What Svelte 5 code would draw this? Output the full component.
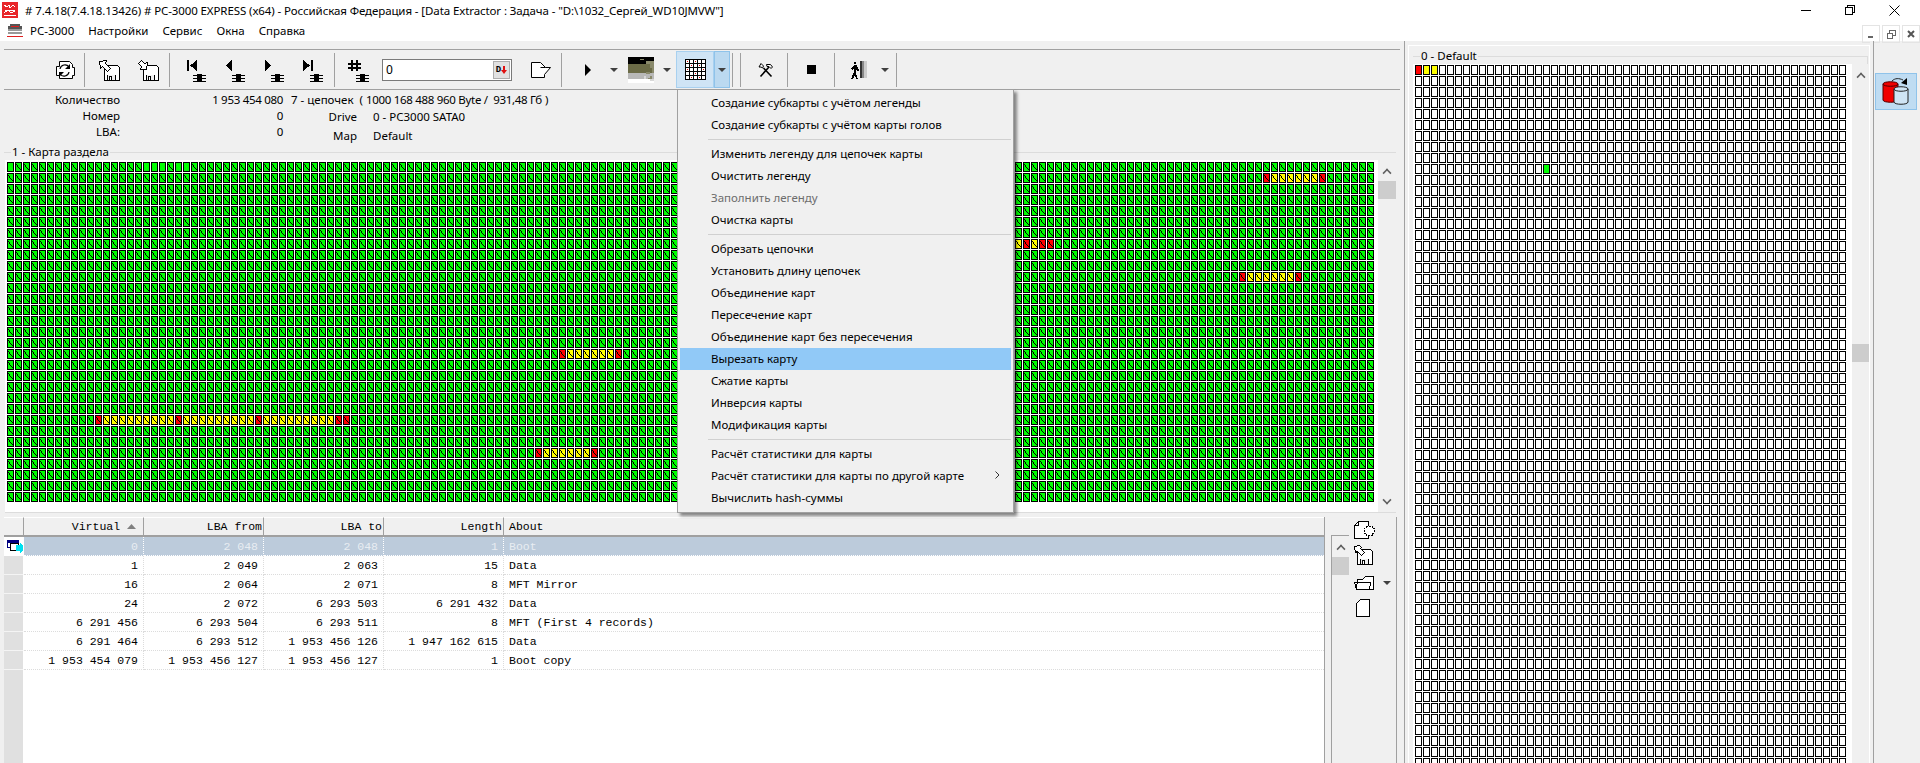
<script>
  const menuBar = ['PC-3000', 'Настройки', 'Сервис', 'Окна', 'Справка'];

  const popup = [
    ['Создание субкарты с учётом легенды', 'Создание субкарты с учётом карты голов'],
    ['Изменить легенду для цепочек карты', 'Очистить легенду', 'Заполнить легенду', 'Очистка карты'],
    ['Обрезать цепочки', 'Установить длину цепочек', 'Объединение карт', 'Пересечение карт', 'Объединение карт без пересечения', 'Вырезать карту', 'Сжатие карты', 'Инверсия карты', 'Модификация карты'],
    ['Расчёт статистики для карты', 'Расчёт статистики для карты по другой карте', 'Вычислить hash-суммы']
  ];

  const rows = [
    ['0', '2 048', '2 048', '1', 'Boot'],
    ['1', '2 049', '2 063', '15', 'Data'],
    ['16', '2 064', '2 071', '8', 'MFT Mirror'],
    ['24', '2 072', '6 293 503', '6 291 432', 'Data'],
    ['6 291 456', '6 293 504', '6 293 511', '8', 'MFT (First 4 records)'],
    ['6 291 464', '6 293 512', '1 953 456 126', '1 947 162 615', 'Data'],
    ['1 953 454 079', '1 953 456 127', '1 953 456 127', '1', 'Boot copy']
  ];

  // r = red, y = yellow, p = plain green, . = leave the default cell
  const chain = 'r' + 'y'.repeat(6) + 'r';
  const runs = [
    [0, 0, 'p................ppp.pp'],
    [1, 157, chain],
    [7, 126, 'yryrr'],
    [10, 154, chain],
    [17, 69, chain],
    [23, 11, ('r' + 'y'.repeat(9)).repeat(3) + 'rr'],
    [26, 66, chain]
  ];

  const kinds = new Map();
  for (const [row, col, s] of runs) {
    [...s].forEach((k, i) => {
      if (k !== '.') kinds.set(row + ':' + (col + i), k);
    });
  }

  function buildMap(cols, rowCount, kindAt, striped) {
    const out = { frame: '', g: '', r: '', y: '', p: '', w: '', diag: '' };
    for (let row = 0; row < rowCount; row++) {
      for (let col = 0; col < cols; col++) {
        const x = col * 8;
        const y = row * 11;
        const k = kindAt(row, col);
        out.frame += `M${x} ${y}h7v10h-7z`;
        out[k] += `M${x + 1} ${y + 1}h5v8h-5z`;
        if (striped && k !== 'p') {
          out.diag += `M${x + 1} ${y + 2}h1v1h-1zM${x + 2} ${y + 3}h1v2h-1zM${x + 3} ${y + 5}h1v1h-1zM${x + 4} ${y + 6}h1v1h-1zM${x + 5} ${y + 7}h1v1h-1z`;
        }
      }
    }
    return out;
  }

  const leftMap = buildMap(171, 31, (r, c) => kinds.get(r + ':' + c) ?? 'g', true);
  const rightMap = buildMap(54, 64, (r, c) => {
    if (r === 0 && c === 0) return 'r';
    if (r === 0 && c < 3) return 'y';
    if (r === 9 && c === 16) return 'g';
    return 'w';
  }, false);
</script>

{#snippet marker(x, y)}
  <path d="M{x} {y}h13v1h-13zM{x} {y + 3}h13v1h-13zM{x} {y + 6}h13v1h-13zM{x + 4} {y - 1}h5v9h-5z" fill="#000" stroke="none" />
{/snippet}

{#snippet caret()}
  <svg class="caret" width="8" height="4" viewBox="0 0 8 4"><path d="M0 0h8L4 4z" fill="#404040" /></svg>
{/snippet}

{#snippet floppy(x, y)}
  <path d="M{x + .5} {y + .5}h13l2 2v13h-15zM{x + 3.5} {y + 9.5}v6h8v-6M{x + 5.5} {y + 11.5}h2v4h-2z" fill="#fff" stroke="#000" />
{/snippet}

{#snippet mapLayers(m)}
  <path d={m.frame} fill="#000" />
  <path d={m.g} fill="#00ff00" />
  <path d={m.p} fill="#00ff00" />
  <path d={m.r} fill="#ff0000" />
  <path d={m.y} fill="#ffff00" />
  <path d={m.w} fill="#fff" />
  <path d={m.diag} fill="#000" />
{/snippet}

<div class="app">
  <header class="titlebar">
    <svg class="appicon" width="16" height="16" viewBox="0 0 16 16" shape-rendering="crispEdges">
      <rect width="16" height="16" fill="#e8262a" />
      <path d="M2 3l3 2 2-2 1 3 3-3 2 2M3 8h10M2 11l4-3 3 3 4-2M2 13h12" fill="none" stroke="#fff" />
    </svg>
    <span class="title">&#35; 7.4.18(7.4.18.13426) &#35; PC-3000 EXPRESS (x64) - Российская Федерация - [Data Extractor : Задача - "D:\1032_Сергей_WD10JMVW"]</span>
    <div class="winbtns">
      <svg width="10" height="10" viewBox="0 0 10 10" shape-rendering="crispEdges"><path d="M0 5.5h10" stroke="#000" /></svg>
      <svg width="10" height="10" viewBox="0 0 10 10" shape-rendering="crispEdges"><path d="M.5 2.5h7v7h-7zM2.5 2.5v-2h7v7h-2" fill="none" stroke="#000" /></svg>
      <svg width="11" height="11" viewBox="0 0 11 11"><path d="M.5.5l10 10M10.500.5l-10 10" stroke="#000" /></svg>
    </div>
  </header>

  <nav class="menubar">
    <svg class="diskicon" width="16" height="13" viewBox="0 0 16 13" shape-rendering="crispEdges">
      <path d="M3 0h10v2h2v3H1V2h2z" fill="#555" />
      <path d="M1 5h14v2H1zM1 8h14v2H1z" fill="#999" />
      <path d="M4 2h8v1H4zM0 12h16v1H0z" fill="#e02020" />
    </svg>
    {#each menuBar as m}<span class="menuitem">{m}</span>{/each}
    <div class="mdibtns">
      <span class="mdi"><svg width="8" height="8" viewBox="0 0 8 8" shape-rendering="crispEdges"><path d="M1 6h5v2H1z" fill="#666" /></svg></span>
      <span class="mdi"><svg width="9" height="9" viewBox="0 0 9 9" shape-rendering="crispEdges"><path d="M.5 3.500h5v5h-5zM2.500 3V.5h6v5H6" fill="none" stroke="#666" /></svg></span>
      <span class="mdi"><svg width="8" height="8" viewBox="0 0 8 8"><path d="M1 1l6 6M7 1L1 7" stroke="#555" stroke-width="2" /></svg></span>
    </div>
  </nav>

  <div class="workspace">
    <section class="leftpane">
      <div class="toolbar">
        <button class="tb first">
          <svg width="22" height="22" viewBox="0 0 22 22">
            <path d="M5.500 2.500h10l3 3v3h2v8h-2v3h-13v-3h-3v-9h3z" fill="#fff" stroke="#000" />
            <path d="M6 10a5 5 0 0 1 9-2M15 13a5 5 0 0 1-9 2" fill="none" stroke="#000" stroke-width="1.200" />
            <path d="M16 5v5h-5zM5 18v-5h5z" fill="#000" />
          </svg>
        </button>
        <span class="sep"></span>
        <button class="tb">
          <svg width="24" height="24" viewBox="0 0 24 24" shape-rendering="crispEdges">
            {@render floppy(7, 7)}
            <path d="M2.500 3.500l7-1-1 3 5 5-3 3-5-5-2 2z" fill="#fff" stroke="#000" />
          </svg>
        </button>
        <button class="tb">
          <svg width="24" height="24" viewBox="0 0 24 24" shape-rendering="crispEdges">
            {@render floppy(7, 7)}
            <path d="M10.500 11.500l-6 0 1-3-3-3 3-3 3 3 3-1z" fill="#fff" stroke="#000" />
          </svg>
        </button>
        <span class="sep nav"></span>
        <button class="tb"><svg width="24" height="24" viewBox="0 0 24 24" shape-rendering="crispEdges"><path d="M3 2h2v11H3zM13 2v11L6 7.500z" fill="#000" />{@render marker(9, 17)}</svg></button>
        <button class="tb"><svg width="24" height="24" viewBox="0 0 24 24" shape-rendering="crispEdges"><path d="M9 2v11L3 7.500z" fill="#000" />{@render marker(9, 17)}</svg></button>
        <button class="tb"><svg width="24" height="24" viewBox="0 0 24 24" shape-rendering="crispEdges"><path d="M3 2v11l6-5.500z" fill="#000" />{@render marker(9, 17)}</svg></button>
        <button class="tb"><svg width="24" height="24" viewBox="0 0 24 24" shape-rendering="crispEdges"><path d="M2 2v11l7-5.500zM10 2h2v11h-2z" fill="#000" />{@render marker(9, 17)}</svg></button>
        <span class="sep hash"></span>
        <button class="tb narrow"><svg width="24" height="24" viewBox="0 0 24 24" shape-rendering="crispEdges"><path d="M4 2h2v11H4zM9 2h2v11H9zM1 5h13v2H1zM1 9h13v2H1z" fill="#000" />{@render marker(9, 17)}</svg></button>
        <div class="lbafield">
          <span>0</span>
          <span class="dbtn"><b>D</b><svg width="6" height="8" viewBox="0 0 6 8"><path d="M2 0h2v4h2L3 8 0 4h2z" fill="#e01010" /></svg></span>
        </div>
        <button class="tb doc">
          <svg width="22" height="20" viewBox="0 0 22 20">
            <path d="M1.500 2.500h9l5 5h5l-6 7v3h-13z" fill="#fff" stroke="#000" />
            <path d="M10.500 7.500h5" stroke="#000" />
          </svg>
        </button>
        <span class="sep play"></span>
        <button class="tb"><svg width="10" height="14" viewBox="0 0 10 14"><path d="M2 1v12l6-6z" fill="#000" /></svg></button>
        <span class="arr">{@render caret()}</span>
        <button class="tb thumb">
          <svg width="26" height="26" viewBox="0 0 26 26" shape-rendering="crispEdges">
            <rect width="26" height="7" fill="#000" />
            <rect y="7" width="26" height="9" fill="#6b6b47" />
            <rect y="16" width="26" height="6" fill="#b8b8b8" />
            <rect y="22" width="26" height="4" fill="#fff" />
            <path d="M12 2h4v1h-4zM18 4h8v3h-8zM22 7h4v4h-4zM24 11h2v5h-2zM18 15h4v2h-4zM22 19h2v3h-2zM20 21h2v1h-2z" fill="#8a8a6c" />
            <path d="M22 22h4v2h-4zM16 19h2v3h-2z" fill="#d8d8d8" />
          </svg>
        </button>
        <span class="arr">{@render caret()}</span>
        <div class="splitbtn">
          <span class="main">
            <svg width="21" height="21" viewBox="0 0 21 21" shape-rendering="crispEdges">
              <rect width="21" height="21" fill="#fff" />
              <path d="M.5.5h20v20H.5zM4.500 0v21M8.500 0v21M12.500 0v21M16.500 0v21M0 4.500h21M0 8.500h21M0 12.500h21M0 16.500h21" fill="none" stroke="#000" />
              <path d="M2 2h1v1H2zM10 2h1v1h-1zM6 6h1v1H6zM14 6h1v1h-1zM18 10h1v1h-1zM2 10h1v1H2zM10 14h1v1h-1zM6 18h1v1H6zM14 18h1v1h-1z" fill="#e00000" />
            </svg>
          </span>
          <span class="drop">{@render caret()}</span>
        </div>
        <span class="sep dbl"></span>
        <span class="sep dbl2"></span>
        <button class="tb">
          <svg width="16" height="16" viewBox="0 0 16 16">
            <path d="M2.500 14.500L11 5M13.500 14.500L5.500 6" stroke="#000" stroke-width="1.600" fill="none" />
            <path d="M8.500 2.500h4l2 2.500-1.500 1.500-2-2h-2zM1 5l2-3.500 2.500 2.500L4.500 6 3 5z" fill="#fff" stroke="#000" />
          </svg>
        </button>
        <span class="sep tools"></span>
        <button class="tb stop"><span class="stopmark"></span></button>
        <span class="sep stopsep"></span>
        <button class="tb walker">
          <svg width="20" height="20" viewBox="0 0 20 20" shape-rendering="crispEdges">
            <circle cx="6" cy="3" r="1.600" fill="#000" />
            <path d="M5 5h3l1 4 1 1-1 1-2-1 0 3 2 6H7l-1-4-2 4H2l3-7V8L3 10 2 9z" fill="#000" />
            <rect x="11" y="1" width="7" height="17" fill="#888" />
            <path d="M11 1h2v17h-2z" fill="#333" />
            <path d="M15 1h3v17h-3z" fill="#ccc" />
          </svg>
        </button>
        <span class="arr">{@render caret()}</span>
        <span class="sep last"></span>
      </div>

      <div class="info">
        <span class="lbl">Количество</span><span class="val">1 953 454 080</span>
        <div class="extra">
          <span class="chains">7 - цепочек  ( <span class="tight">1000 168 488 960 Byte /  931,48 Гб</span> )</span>
          <span class="kv"><i>Drive</i><span>0 - PC3000 SATA0</span></span>
          <span class="kv mapkv"><i>Map</i><span>Default</span></span>
        </div>
        <span class="lbl">Номер</span><span class="val">0</span>
        <span class="lbl">LBA:</span><span class="val">0</span>
      </div>

      <fieldset class="group">
        <legend>1 - Карта раздела</legend>
        <div class="mapbox">
          <svg class="cells" width="1372" height="352" shape-rendering="crispEdges">
            <g transform="translate(2 2)">
              {@render mapLayers(leftMap)}
            </g>
          </svg>
          <div class="vscroll">
            <span class="up"></span>
            <span class="knob"></span>
            <span class="down"></span>
          </div>
        </div>
      </fieldset>

      <div class="lower">
        <div class="tablewrap">
          <table>
            <colgroup>
              <col class="rh" /><col class="c" /><col class="c" /><col class="c" /><col class="c" /><col />
            </colgroup>
            <thead>
              <tr>
                <th></th>
                <th class="sorted">Virtual <svg width="9" height="5" viewBox="0 0 9 5"><path d="M0 5L4.500 0 9 5z" fill="#808080" /></svg></th>
                <th>LBA from</th>
                <th>LBA to</th>
                <th>Length</th>
                <th class="about">About</th>
              </tr>
            </thead>
            <tbody>
              {#each rows as r, i}
                <tr class:selected={i === 0}>
                  <td class="rowhead">
                    {#if i === 0}
                      <svg width="18" height="14" viewBox="0 0 18 14" shape-rendering="crispEdges">
                        <path d="M.5 1.500h11v7h-11z" fill="#fff" stroke="#000080" />
                        <path d="M1 2h10v2H1z" fill="#000080" />
                        <path d="M3.500 4.500h8v7h-8z" fill="#fff" stroke="#000" />
                        <path d="M9 6h4V4l5 5-5 5v-2H9z" fill="#00e0f0" />
                      </svg>
                    {/if}
                  </td>
                  {#each r as v, j}
                    <td class:about={j === 4}>{v}</td>
                  {/each}
                </tr>
              {/each}
              <tr class="filler"><td class="rowhead"></td><td colspan="5"></td></tr>
            </tbody>
          </table>
        </div>
        <aside class="sidetools">
          <div class="vscroll short">
            <span class="up"></span>
            <span class="knob"></span>
          </div>
          <div class="sideicons">
            <svg width="21" height="19" viewBox="0 0 21 19" shape-rendering="crispEdges">
              <path d="M4.500.5h10v17h-14v-13z" fill="#fff" stroke="#000" />
              <path d="M4.500.5v4h-4" fill="none" stroke="#000" />
              <path d="M12 5h6v2h2v5h-2v2h-6v-2h-2V7h2z" fill="#fff" stroke="#000" stroke-dasharray="2 1" />
            </svg>
            <svg width="20" height="20" viewBox="0 0 20 20" shape-rendering="crispEdges">
              {@render floppy(3, 4)}
              <path d="M.5 1.500l5-1 2 2-1 1 4 4-3 3-4-4-2 1z" fill="#fff" stroke="#000" />
            </svg>
            <div class="folder">
              <svg width="21" height="14" viewBox="0 0 21 14" shape-rendering="crispEdges">
                <path d="M3.500 3.500h5l3-3h8v13h-17zM.5 6.500h16l-1 7h-13z" fill="#fff" stroke="#000" />
              </svg>
              {@render caret()}
            </div>
            <svg class="blank" width="14" height="19" viewBox="0 0 14 19" shape-rendering="crispEdges">
              <path d="M4.500.5h9v17h-13v-13z" fill="#fff" stroke="#000" />
            </svg>
          </div>
        </aside>
      </div>
    </section>

    <div class="splitter"></div>

    <section class="rightpane">
      <fieldset class="group rgroup">
        <legend>0 - Default</legend>
        <div class="mapbox rbox">
          <svg class="cells" width="438" height="704" shape-rendering="crispEdges">
            <g transform="translate(2 1)">
              {@render mapLayers(rightMap)}
            </g>
          </svg>
          <div class="vscroll rscroll">
            <span class="up"></span>
            <span class="knob"></span>
          </div>
        </div>
      </fieldset>
    </section>

    <aside class="rightbar">
      <span class="dbbtn">
        <svg width="28" height="28" viewBox="0 0 28 28">
          <path d="M1 6c0-3 15-3 15 0v16c0 3-15 3-15 0z" fill="#f00000" stroke="#500" />
          <path d="M1 6c0 3 15 3 15 0" fill="none" stroke="#500" />
          <path d="M12 11c0-3 14-3 14 0v13c0 3-14 3-14 0z" fill="#cfe4f4" stroke="#222" />
          <path d="M12 11c0 3 14 3 14 0" fill="none" stroke="#222" />
          <path d="M19 5l6-5v7z" fill="#000" />
          <path d="M10 3c3-3 7-3 11-1" fill="none" stroke="#222" />
        </svg>
      </span>
    </aside>
  </div>

  <div class="popup">
    {#each popup as group, g}
      {#if g > 0}<div class="popsep"></div>{/if}
      {#each group as item}
        <div class="popitem" class:hot={item === 'Вырезать карту'} class:off={item === 'Заполнить легенду'}>
          <span>{item}</span>
          {#if item.includes('по другой карте')}
            <svg width="5" height="8" viewBox="0 0 5 8"><path d="M.5.5L4 4 .5 7.500" fill="none" stroke="#333" /></svg>
          {/if}
        </div>
      {/each}
    {/each}
  </div>
</div>

<style>
  :global(body) {
    margin: 0;
    overflow: hidden;
    background: #f0f0f0;
  }

  .app {
    position: relative;
    width: 1920px;
    height: 763px;
    overflow: hidden;
    display: flex;
    flex-direction: column;
    font-family: "Noto Sans", "Liberation Sans", sans-serif;
    font-size: 11.5px;
    color: #000;
    background: #f0f0f0;
  }

  svg {
    display: block;
    flex: none;
  }

  .titlebar {
    height: 20px;
    background: #fff;
    display: flex;
    align-items: center;
    padding-left: 2px;
    flex: none;
  }

  .title {
    margin-left: 7px;
    white-space: pre;
    letter-spacing: -0.1px;
  }

  .winbtns {
    margin-left: auto;
    display: flex;
    align-items: center;
    gap: 34px;
    padding-right: 20px;
  }

  .menubar {
    height: 21px;
    background: #fff;
    display: flex;
    align-items: center;
    padding-left: 7px;
    flex: none;
  }

  .diskicon {
    margin-right: 7px;
  }

  .menuitem {
    margin-right: 14px;
  }

  .mdibtns {
    margin-left: auto;
    display: flex;
    gap: 2px;
    height: 18px;
    align-self: flex-start;
    margin-top: 5px;
  }

  .mdi {
    width: 16px;
    height: 16px;
    border: 1px solid #e4e4e4;
    display: flex;
    align-items: center;
    justify-content: center;
  }

  .workspace {
    flex: 1;
    display: flex;
    min-height: 0;
  }

  .leftpane {
    width: 1392px;
    padding: 8px 0 0 4px;
    display: flex;
    flex-direction: column;
    flex: none;
  }

  .toolbar {
    height: 39px;
    margin-right: -4px;
    border-top: 1px solid #a0a0a0;
    border-bottom: 1px solid #a0a0a0;
    display: flex;
    align-items: center;
    flex: none;
    position: relative;
  }

  .tb {
    width: 39px;
    height: 30px;
    padding: 0;
    border: none;
    background: none;
    display: flex;
    align-items: center;
    justify-content: center;
    flex: none;
  }

  .tb.first {
    margin-left: 41px;
  }

  .tb.narrow {
    width: 40px;
  }

  .sep {
    width: 1px;
    height: 34px;
    background: #a0a0a0;
    margin-right: 4px;
    flex: none;
  }

  .sep.nav {
    margin-left: 2px;
    margin-right: 6px;
  }

  .sep.hash {
    margin-left: 2px;
  }

  .sep.play {
    margin-right: 6px;
  }

  .sep.dbl {
    margin-left: 2px;
    margin-right: 7px;
  }

  .sep.dbl2 {
    margin-right: 5px;
  }

  .sep.tools {
    margin-left: 2px;
  }

  .sep.stopsep {
    margin-left: 3px;
  }

  .sep.last {
    margin-left: 4px;
  }

  .lbafield {
    width: 125px;
    height: 20px;
    margin-left: 3px;
    border: 1px solid #7a7a7a;
    background: #fff;
    display: flex;
    align-items: center;
    justify-content: space-between;
    padding-left: 3px;
    font-size: 12px;
    box-sizing: content-box;
    flex: none;
  }

  .dbtn {
    width: 15px;
    height: 16px;
    margin-right: 1px;
    background: #e1e1e1;
    border: 1px solid #adadad;
    display: flex;
    align-items: center;
    justify-content: center;
    gap: 0;
    font-family: "Liberation Mono", monospace;
    font-size: 9px;
  }

  .tb.doc {
    width: 40px;
    margin-left: 9px;
  }

  .arr {
    width: 14px;
    display: flex;
    justify-content: center;
    flex: none;
  }

  .splitbtn {
    height: 37px;
    margin-left: 2px;
    display: flex;
    flex: none;
  }

  .splitbtn .main {
    width: 38px;
    background: #cfe4f5;
    border: 1px solid #a8d0ef;
    box-sizing: border-box;
    display: flex;
    align-items: center;
    justify-content: center;
  }

  .splitbtn .drop {
    width: 16px;
    background: #bbd9f0;
    border: 1px solid #8fc3ea;
    box-sizing: border-box;
    display: flex;
    align-items: center;
    justify-content: center;
  }

  .stopmark {
    width: 9px;
    height: 9px;
    background: #000;
  }

  .info {
    height: 55px;
    flex: none;
    display: grid;
    grid-template-columns: 116px 163px 1fr;
    grid-auto-rows: 16px;
    padding-top: 2px;
    box-sizing: border-box;
    line-height: 16px;
  }

  .lbl,
  .val {
    text-align: right;
  }

  .val {
    letter-spacing: -0.3px;
  }

  .extra {
    grid-row: 1 / span 3;
    grid-column: 3;
    display: flex;
    flex-direction: column;
    padding-left: 8px;
  }

  .chains {
    white-space: pre;
  }

  .tight {
    letter-spacing: -0.3px;
  }

  .kv {
    display: flex;
    margin-top: 1px;
  }

  .kv i {
    width: 66px;
    font-style: normal;
    text-align: right;
    margin-right: 16px;
  }

  .kv.mapkv {
    margin-top: 3px;
  }

  .group {
    margin: 0 0 4px;
    padding: 1px 0 0;
    border: 1px solid #dcdcdc;
    border-width: 1px 0 0;
    min-width: 0;
    flex: none;
  }

  .group legend {
    margin-left: 7px;
    padding: 0 1px;
    line-height: 14px;
  }

  .mapbox {
    height: 352px;
    display: flex;
    background: #fff;
    margin-left: 1px;
    border-bottom: 1px solid #dcdcdc;
  }

  .cells {
    flex: none;
  }

  .vscroll {
    width: 18px;
    margin-left: auto;
    background: #f0f0f0;
    border-left: 1px solid #fff;
    display: flex;
    flex-direction: column;
    align-items: center;
    flex: none;
    position: relative;
  }

  .vscroll .up,
  .vscroll .down {
    width: 6px;
    height: 6px;
    border: solid #606060;
    border-width: 2px 0 0 2px;
    transform: rotate(45deg) scale(0.8);
    margin-top: 9px;
  }

  .vscroll .down {
    transform: rotate(225deg) scale(0.8);
    margin-top: auto;
    margin-bottom: 8px;
  }

  .vscroll .knob {
    width: 100%;
    height: 18px;
    background: #cdcdcd;
    margin-top: 4px;
  }

  .lower {
    flex: 1;
    min-height: 0;
    display: flex;
  }

  .tablewrap {
    width: 1320px;
    height: 100%;
    background: #fff;
    border-right: 1px solid #a0a0a0;
    flex: none;
  }

  table {
    width: 100%;
    height: 100%;
    table-layout: fixed;
    border-collapse: separate;
    border-spacing: 0;
    font-family: "Liberation Mono", monospace;
    font-size: 11.5px;
  }

  col.rh {
    width: 20px;
  }

  col.c {
    width: 120px;
  }

  th {
    height: 20px;
    padding: 0 1px 0 0;
    text-align: right;
    font-weight: normal;
    background: #f0f0f0;
    border-top: 1px solid #fff;
    border-bottom: 2px solid #a0a0a0;
    border-right: 1px solid #a0a0a0;
    box-sizing: border-box;
    white-space: nowrap;
  }

  th.sorted {
    padding-right: 7px;
  }

  th svg {
    display: inline-block;
    vertical-align: 1px;
  }

  th.about,
  td.about {
    text-align: left;
    padding-left: 5px;
    border-right: none;
  }

  td {
    height: 19px;
    padding: 1px 5px 0 0;
    text-align: right;
    box-sizing: border-box;
    border-bottom: 1px dotted #dcdcdc;
    border-right: 1px dotted #dcdcdc;
    white-space: nowrap;
    overflow: hidden;
  }

  td.rowhead {
    background: #e0e0e0;
    padding: 0;
    border-bottom: 1px solid #f4f4f4;
    border-right: 1px solid #fff;
  }

  tr.selected td {
    background: #bccbdb;
    color: #e8edf2;
    border-right-color: #fff;
    border-bottom-color: #fff;
  }

  tr.selected td.rowhead {
    background: #fff;
  }

  tr.selected td.rowhead svg {
    margin: 0 0 0 3px;
  }

  tr.filler td {
    height: auto;
    border: none;
  }

  tr.filler td.rowhead {
    border-right: 1px solid #fff;
  }

  .sidetools {
    width: 72px;
    flex: none;
    display: flex;
    border-right: 1px solid #a0a0a0;
    box-sizing: border-box;
  }

  .vscroll.short {
    margin: 18px 0 0 6px;
    width: 17px;
    border: solid #a0a0a0;
    border-width: 1px 0 0 1px;
    box-sizing: content-box;
  }

  .sideicons {
    display: flex;
    flex-direction: column;
    gap: 5px;
    padding: 4px 0 0 5px;
  }

  .folder {
    display: flex;
    align-items: center;
    gap: 8px;
    margin: 6px 0 4px;
  }

  .blank {
    margin-left: 2px;
  }

  .splitter {
    width: 12px;
    flex: none;
    position: relative;
    background: linear-gradient(#a0a0a0, #a0a0a0) no-repeat 8px 0 / 1px 100%;
  }

  .rightpane {
    width: 462px;
    margin-top: 4px;
    padding: 3px 1px 0 4px;
    box-sizing: border-box;
    border: solid #fff;
    border-width: 1px 1px 0 1px;
    flex: none;
    height: 718px;
    overflow: hidden;
  }

  .rgroup {
    margin: 0;
    border-width: 1px 1px 0 0;
  }

  .rbox {
    height: 700px;
    border: none;
    margin-left: 0;
  }

  .rscroll .knob {
    margin-top: 263px;
  }

  .rightbar {
    flex: 1;
    display: flex;
    justify-content: flex-end;
    align-items: flex-start;
    padding: 32px 3px 0 0;
    position: relative;
    border-left: 3px solid #f0f0f0;
    background: linear-gradient(#a0a0a0, #a0a0a0) no-repeat 0 0 / 1px 100%;
  }

  .dbbtn {
    width: 42px;
    height: 37px;
    background: #bfdcf2;
    border: 1px solid #8fc3ea;
    box-sizing: border-box;
    display: flex;
    align-items: center;
    justify-content: center;
  }

  .popup {
    position: absolute;
    left: 677px;
    top: 89px;
    width: 337px;
    padding: 2px 2px 3px;
    box-sizing: border-box;
    background: #f0f0f0;
    border: 1px solid #a0a0a0;
    box-shadow: 3px 3px 3px rgba(0, 0, 0, 0.45);
    font-size: 11.5px;
  }

  .popitem {
    height: 22px;
    padding: 0 11px 2px 31px;
    box-sizing: border-box;
    display: flex;
    align-items: center;
    justify-content: space-between;
    white-space: nowrap;
  }

  .popitem.hot {
    background: #91c9f7;
  }

  .popitem.off {
    color: #6d6d6d;
  }

  .popsep {
    height: 1px;
    margin: 3px 0 3px 28px;
    background: #d0d0d0;
  }
</style>
